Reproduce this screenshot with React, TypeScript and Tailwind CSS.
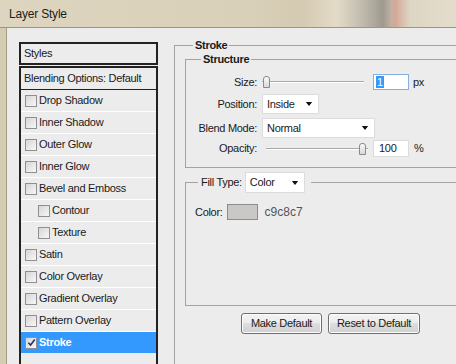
import React from "react";

const styleRows = [
  { label: "Drop Shadow" },
  { label: "Inner Shadow" },
  { label: "Outer Glow" },
  { label: "Inner Glow" },
  { label: "Bevel and Emboss" },
  { label: "Contour", indent: true },
  { label: "Texture", indent: true },
  { label: "Satin" },
  { label: "Color Overlay" },
  { label: "Gradient Overlay" },
  { label: "Pattern Overlay" },
  { label: "Stroke", active: true },
];

function Check({ checked }: { checked?: boolean }) {
  return (
    <span className="flex h-[12px] w-[12px] shrink-0 items-center justify-center border border-[#8f8f8f] bg-[linear-gradient(135deg,#d6d6d6,#f7f7f7)]">
      {checked && (
        <svg viewBox="0 0 10 10" className="h-[9px] w-[9px]">
          <path d="M1.5 5.2 L4 7.8 L8.6 1.6" stroke="#1f2f7a" strokeWidth="1.7" fill="none" />
        </svg>
      )}
    </span>
  );
}

function Arrow() {
  return (
    <svg viewBox="0 0 8 5" className="h-[4px] w-[8px]">
      <path d="M0 0 H8 L4 5 Z" fill="#111" />
    </svg>
  );
}

function Select({ value, width }: { value: string; width: string }) {
  return (
    <div className={`flex h-[20px] items-center justify-between border border-[#dcdcdc] bg-white pl-[4px] pr-[5px] ${width}`}>
      <span>{value}</span>
      <Arrow />
    </div>
  );
}

function Slider({ at, width }: { at: "start" | "end"; width: string }) {
  return (
    <div className={`relative h-[16px] ${width}`}>
      <div className="absolute left-0 right-0 top-[7px] h-[2px] border-t border-[#a8a8a8] bg-white" />
      <div
        className={`absolute top-[2px] h-[12px] w-[7px] rounded-t-[3px] border border-[#8a8a8a] bg-[linear-gradient(#fafafa,#d8d8d8)] ${
          at === "start" ? "left-[1px]" : "right-[2px]"
        }`}
      />
    </div>
  );
}

export default function App() {
  return (
    <div className="flex h-[364px] w-[456px] flex-col overflow-hidden bg-[#d8cfb8] font-['Liberation_Sans',Arial,sans-serif] text-[11px] tracking-[-0.3px] text-[#1a1a1a]">
      <div className="flex h-[27px] shrink-0 items-center bg-[linear-gradient(90deg,#ddd5bf_0%,#d9d0b9_55%,#d4cab2_66%,#e3dbc8_74%,#bdb7aa_80%,#9f9a90_84%,#c4b3a4_86%,#d3a696_86.5%,#ded6c4_90%,#e4ddcd_100%)] pl-[9px]">
        <span className="text-[12px] tracking-[-0.2px] text-[#1c1c1c]">Layer Style</span>
      </div>
      <div className="flex flex-1 border-t border-[#9c9582]">
        <div className="w-[7px] shrink-0 border-r border-[#a39c88] bg-[#d5ccb4]" />
        <div className="flex flex-1 bg-[#ececec] pl-[12px] pt-[14px]">
          {/* styles list */}
          <div className="flex w-[139px] shrink-0 flex-col">
            <div className="flex h-[23px] items-center border-2 border-[#222] pl-[3px]">Styles</div>
            <div className="mt-[1px] h-[320px] border-2 border-[#222]">
              <div className="flex h-[22px] items-center border-b border-[#222] pl-[3px]">
                Blending Options: Default
              </div>
              {styleRows.map((row) => (
                <div
                  key={row.label}
                  className={`flex h-[22px] items-center gap-[2px] border-b ${
                    row.active ? "border-[#ececec] bg-[#3399ff] font-bold text-white" : "border-white"
                  } ${row.indent ? "pl-[17px]" : "pl-[4px]"}`}
                >
                  <Check checked={row.active} />
                  <span>{row.label}</span>
                </div>
              ))}
            </div>
          </div>

          {/* settings */}
          <div className="ml-[16px] mt-[3px] w-[300px] shrink-0 border-l border-t border-[#a3a3a3]">
            <div className="-mt-[8px] flex h-[15px] items-center">
              <span className="ml-[18px] bg-[#ececec] px-[2px] font-bold">Stroke</span>
            </div>

            <div className="ml-[10px] mt-[6px] border-b border-l border-t border-[#a3a3a3] pb-[10px]">
              <div className="-mt-[8px] flex h-[15px] items-center">
                <span className="ml-[15px] bg-[#ececec] px-[2px] font-bold">Structure</span>
              </div>

              <div className="mt-[7px] flex flex-col">
                <div className="flex h-[16px] items-center">
                  <span className="w-[71px] text-right">Size:</span>
                  <div className="ml-[5px]">
                    <Slider at="start" width="w-[102px]" />
                  </div>
                  <div className="ml-[9px] flex h-[16px] w-[36px] items-center border border-[#86b1de] bg-white pl-[2px]">
                    <span className="bg-[#3399ff] px-[1px] leading-[12px] text-white">1</span>
                  </div>
                  <span className="ml-[4px]">px</span>
                </div>

                <div className="mt-[4px] flex items-center">
                  <span className="w-[71px] text-right">Position:</span>
                  <div className="ml-[5px]">
                    <Select value="Inside" width="w-[57px]" />
                  </div>
                </div>

                <div className="mt-[4px] flex items-center">
                  <span className="w-[71px] text-right">Blend Mode:</span>
                  <div className="ml-[5px]">
                    <Select value="Normal" width="w-[113px]" />
                  </div>
                </div>

                <div className="mt-[2px] flex h-[17px] items-center">
                  <span className="w-[71px] text-right">Opacity:</span>
                  <div className="ml-[9px]">
                    <Slider at="end" width="w-[102px]" />
                  </div>
                  <div className="ml-[5px] flex h-[17px] w-[36px] items-center border border-[#dcdcdc] bg-white pl-[5px]">
                    100
                  </div>
                  <span className="ml-[5px]">%</span>
                </div>
              </div>
            </div>

            <div className="ml-[10px] mt-[14px] h-[124px] border-b border-l border-t border-[#a3a3a3]">
              <div className="-mt-[11px] flex h-[21px] items-center">
                <span className="ml-[12px] flex items-center bg-[#ececec] pl-[3px] pr-[6px]">
                  <span>Fill Type:</span>
                  <div className="ml-[3px] flex h-[21px] w-[60px] items-center justify-between border border-[#dcdcdc] bg-white pl-[4px] pr-[5px]">
                    <span>Color</span>
                    <Arrow />
                  </div>
                </span>
              </div>
              <div className="mt-[10px] flex items-center pl-[9px]">
                <span>Color:</span>
                <div className="ml-[4px] h-[16px] w-[31px] border border-[#8c8c8c] bg-[#c9c8c7]" />
                <span className="ml-[7px] text-[12px] tracking-[0px] text-[#555]">c9c8c7</span>
              </div>
            </div>

            <div className="ml-[66px] mt-[7px] flex gap-[6px]">
              <button className="flex h-[21px] w-[81px] items-center justify-center rounded-[3px] border border-[#707070] bg-[linear-gradient(#f4f4f4,#ebebeb_50%,#dedede_50%,#d0d0d0)] shadow-[inset_0_0_0_1px_#fcfcfc]">
                Make Default
              </button>
              <button className="flex h-[21px] w-[92px] items-center justify-center rounded-[3px] border border-[#707070] bg-[linear-gradient(#f4f4f4,#ebebeb_50%,#dedede_50%,#d0d0d0)] shadow-[inset_0_0_0_1px_#fcfcfc]">
                Reset to Default
              </button>
            </div>
          </div>
        </div>
      </div>
    </div>
  );
}
